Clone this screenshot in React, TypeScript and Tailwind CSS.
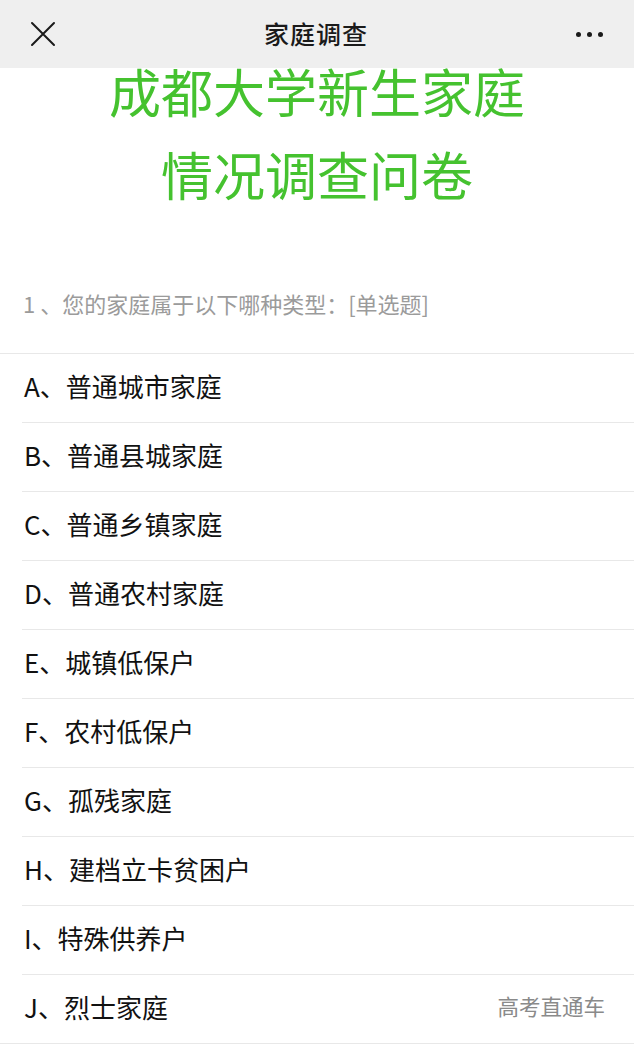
const options = [
    "A、普通城市家庭",
    "B、普通县城家庭",
    "C、普通乡镇家庭",
    "D、普通农村家庭",
    "E、城镇低保户",
    "F、农村低保户",
    "G、孤残家庭",
    "H、建档立卡贫困户",
    "I、特殊供养户",
    "J、烈士家庭",
];

function App() {
    return (
        <div className="w-[634px] min-h-[1048px] bg-white font-['Noto_Sans_CJK_SC','Noto_Sans',sans-serif] overflow-hidden">
            {/* Top bar */}
            <div className="h-[68px] bg-[#efefef] flex items-center justify-between px-[30px]">
                <svg width="26" height="26" viewBox="0 0 26 26" className="text-[#1a1a1a]">
                    <path d="M2 2L24 24M24 2L2 24" stroke="currentColor" strokeWidth="2" strokeLinecap="round" />
                </svg>
                <div className="text-[25px] font-medium text-[#1a1a1a] tracking-[1px]">家庭调查</div>
                <div className="flex gap-[6px] pr-[1px]">
                    <span className="w-[5px] h-[5px] rounded-full bg-[#1a1a1a]"></span>
                    <span className="w-[5px] h-[5px] rounded-full bg-[#1a1a1a]"></span>
                    <span className="w-[5px] h-[5px] rounded-full bg-[#1a1a1a]"></span>
                </div>
            </div>

            {/* Title */}
            <div className="flex flex-col items-center text-[#45c22f] text-[52px]">
                <div className="leading-[46px]">成都大学新生家庭</div>
                <div className="leading-[46px] mt-[37px]">情况调查问卷</div>
            </div>

            {/* Question */}
            <div className="pl-[23px] pt-[92px] pb-[36px] text-[22px] leading-[28px] text-[#9b9b9b]">
                1 、您的家庭属于以下哪种类型：[单选题]
            </div>

            {/* Options */}
            <div className="border-b border-[#e8e8e8]">
                {options.map((opt, i) => (
                    <div key={opt} className={i === 0 ? "border-t border-[#e8e8e8]" : "pl-[22px]"}>
                        <div
                            className={
                                "flex items-center justify-between pr-[29px] pb-[5px] text-[26px] text-[#111] " +
                                (i === 0 ? "pl-[24px] h-[68px]" : "pl-[2px] h-[69px] border-t border-[#e8e8e8]")
                            }
                        >
                            <span>{opt}</span>
                            {i === options.length - 1 && (
                                <span className="text-[21.5px] text-[#8a8a8a]">高考直通车</span>
                            )}
                        </div>
                    </div>
                ))}
            </div>
        </div>
    );
}

export default App;
